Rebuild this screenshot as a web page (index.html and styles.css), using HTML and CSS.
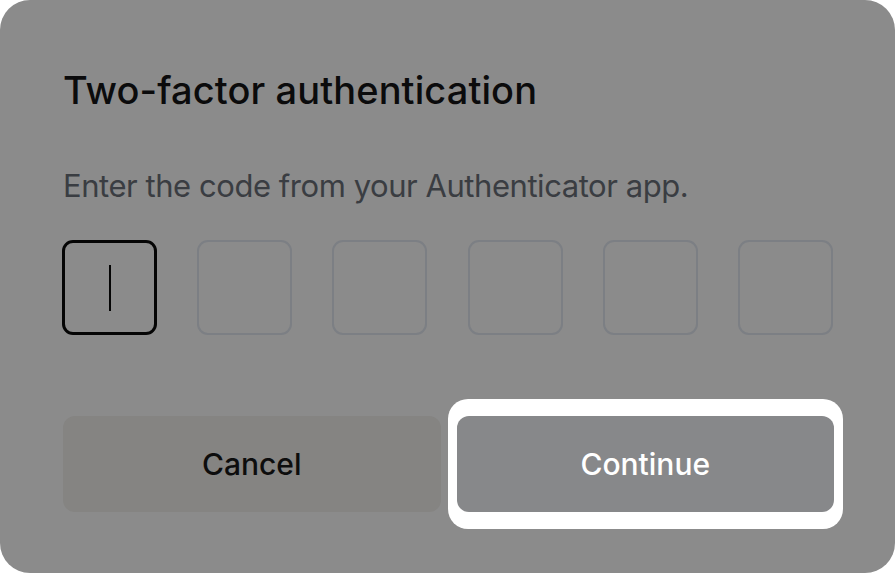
FILE: index.html
```html
<!DOCTYPE html>
<html lang="en">
<head>
<meta charset="utf-8">
<title>Two-factor authentication</title>
<link rel="stylesheet" href="styles.css">
</head>
<body>
  <div class="card">
    <h1 class="title">Two-factor authentication</h1>
    <p class="subtitle">Enter the code from your Authenticator app.</p>
    <div class="code">
      <div class="digit active"><span class="caret"></span></div>
      <div class="digit"></div>
      <div class="digit"></div>
      <div class="digit"></div>
      <div class="digit"></div>
      <div class="digit"></div>
    </div>
    <div class="actions">
      <button class="btn cancel">Cancel</button>
      <button class="btn continue">Continue</button>
    </div>
  </div>
</body>
</html>
```
FILE: styles.css
```css
* { box-sizing: border-box; }
html, body { margin: 0; padding: 0; background: #ffffff; }
body { width: 895px; height: 573px; overflow: hidden; }
.card {
  width: 895px;
  height: 573px;
  background: #8b8b8b;
  border-radius: 30px;
  padding: 67px 61px 0 63px;
  font-family: Inter, "Noto Sans", sans-serif;
}
.title {
  margin: 0;
  font-size: 38px;
  line-height: 46px;
  font-weight: 500;
  color: #0b0b0c;
  letter-spacing: 0.1px;
}
.subtitle {
  margin: 54px 0 0;
  font-size: 31px;
  line-height: 38px;
  font-weight: 400;
  color: #3a3d42;
  letter-spacing: -0.45px;
}
.code {
  margin-top: 35px;
  margin-left: -1px;
  display: flex;
  justify-content: space-between;
  width: 771px;
}
.digit {
  width: 95px;
  height: 95px;
  border: 2px solid #7c7f84;
  border-radius: 11px;
  display: flex;
  align-items: center;
  justify-content: center;
}
.digit.active { border: 3px solid #050505; }
.caret {
  width: 2px;
  height: 46px;
  background: #050505;
}
.actions {
  margin-top: 81px;
  display: grid;
  grid-template-columns: 1fr 1fr;
  gap: 16px;
}
.btn {
  position: relative;
  height: 96px;
  border: none;
  border-radius: 12px;
  font-family: Inter, "Noto Sans", sans-serif;
  font-size: 30px;
  font-weight: 500;
  padding: 0;
}
.cancel { background: #858482; color: #0d0d0d; }
.continue { background: #87888a; color: #ffffff; z-index: 0; }
.continue::before {
  content: "";
  position: absolute;
  top: -17px;
  bottom: -17px;
  left: -9px;
  right: -9px;
  background: #ffffff;
  border-radius: 20px;
  z-index: -1;
}
.continue::after {
  content: "";
  position: absolute;
  inset: 0;
  border-radius: 12px;
  background: #87888a;
  z-index: -1;
}
```
